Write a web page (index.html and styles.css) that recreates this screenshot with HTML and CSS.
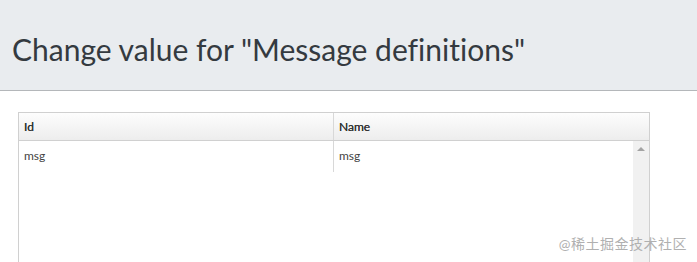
FILE: index.html
```html
<!DOCTYPE html>
<html lang="en">
<head>
    <meta charset="UTF-8">
    <title>Change value</title>
    <link rel="stylesheet" href="styles.css">
</head>
<body>
    <div class="header">
        <h1>Change value for "Message definitions"</h1>
    </div>
    <div class="content">
        <div class="grid">
            <div class="grid-head">
                <div class="col col-id">Id</div>
                <div class="col col-name">Name</div>
            </div>
            <div class="grid-body">
                <div class="rows">
                    <div class="row">
                        <div class="cell col-id">msg</div>
                        <div class="cell col-name">msg</div>
                    </div>
                </div>
                <div class="scrollbar">
                    <span class="arrow-up"></span>
                </div>
            </div>
        </div>
    </div>
    <div class="watermark">@稀土掘金技术社区</div>
</body>
</html>
```

FILE: styles.css
```css
body {
    margin: 0;
    font-family: Lato, "Noto Sans CJK SC", sans-serif;
    background-color: #fff;
    color: #333;
    height: 262px;
    overflow: hidden;
    position: relative;
}
.header {
    background-color: #e9ecef;
    height: 91px;
    border-bottom: 1px solid #b4b7ba;
    box-sizing: border-box;
    padding: 31px 0 0 12px;
}
h1 {
    margin: 0;
    font-size: 30px;
    font-weight: normal;
    font-variant-ligatures: none;
    color: #343a40;
    line-height: 36px;
}
.content {
    padding: 21px 0 0 18px;
}
.grid {
    width: 632px;
    box-sizing: border-box;
    border: 1px solid #d0d0d0;
    border-bottom: none;
    height: 160px;
    display: flex;
    flex-direction: column;
}
.grid-head {
    display: flex;
    height: 27px;
    background: linear-gradient(#fdfdfd, #ededed);
    border-bottom: 1px solid #d0d0d0;
    font-size: 12px;
    color: #333;
    text-shadow: 0 0 0.3px #333;
}
.grid-head .col {
    padding: 0 5px;
    line-height: 27px;
    box-sizing: border-box;
}
.col-id {
    width: 315px;
    border-right: 1px solid #d8d8d8;
}
.col-name {
    flex: 1;
}
.grid-body {
    flex: 1;
    display: flex;
}
.rows {
    flex: 1;
}
.row {
    display: flex;
    height: 31px;
}
.cell {
    font-size: 12px;
    color: #444;
    padding: 0 5px;
    line-height: 30px;
    box-sizing: border-box;
}
.row .col-id {
    width: 315px;
}
.scrollbar {
    width: 16px;
    background-color: #f1f1f1;
    position: relative;
}
.arrow-up {
    position: absolute;
    left: 4px;
    top: 6px;
    width: 0;
    height: 0;
    border-left: 4px solid transparent;
    border-right: 4px solid transparent;
    border-bottom: 4px solid #a3a3a3;
}
.watermark {
    position: absolute;
    right: 10px;
    top: 233px;
    font-size: 14px;
    color: #b0b0b0;
    letter-spacing: 0.5px;
}
```
